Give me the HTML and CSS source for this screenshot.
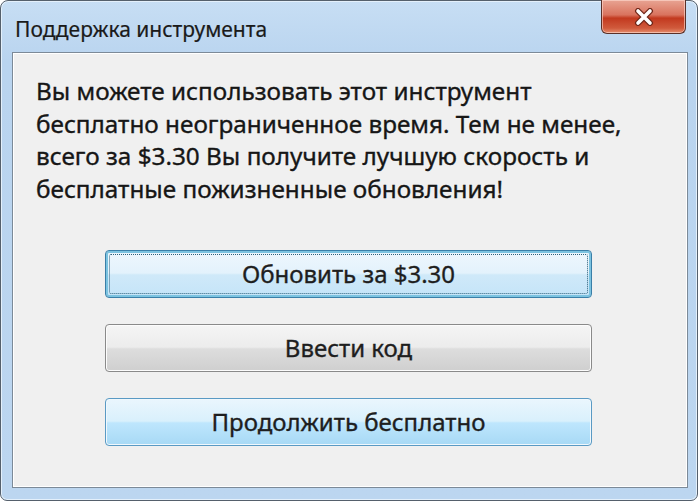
FILE: index.html
```html
<!DOCTYPE html>
<html lang="ru">
<head>
<meta charset="utf-8">
<title>Поддержка инструмента</title>
<link rel="stylesheet" href="styles.css">
</head>
<body>
<div class="window">
  <div class="titlebar">
    <div class="title">Поддержка инструмента</div>
    <div class="close">
      <svg width="24" height="18" viewBox="0 0 24 18">
        <path d="M6 3 L18 15 M18 3 L6 15" stroke="#6e2618" stroke-width="6" stroke-linecap="round"/>
        <path d="M6 3 L18 15 M18 3 L6 15" stroke="#ffffff" stroke-width="3.6" stroke-linecap="round"/>
      </svg>
    </div>
  </div>
  <div class="panel">
    <p class="message">Вы можете использовать этот инструмент<br>бесплатно неограниченное время. Тем не менее,<br>всего за $3.30 Вы получите лучшую скорость и<br>бесплатные пожизненные обновления!</p>
    <div class="buttons">
      <div class="btn btn-focus"><span class="focus-ring">Обновить за $3.30</span></div>
      <div class="btn btn-normal">Ввести код</div>
      <div class="btn btn-hover">Продолжить бесплатно</div>
    </div>
  </div>
</div>
</body>
</html>
```
FILE: styles.css
```css
html, body {
  margin: 0;
  padding: 0;
  background: #ffffff;
}
body {
  font-family: "Noto Sans", "Open Sans", sans-serif;
  color: #1e1e1e;
}
.window {
  width: 698px;
  height: 501px;
  box-sizing: border-box;
  border: 1px solid #55606c;
  border-radius: 8px 8px 7px 7px;
  background: linear-gradient(180deg, #c7def4 0%, #b9d4ef 12%, #bcd6f0 100%);
  box-shadow: inset 0 0 0 1px #e4f0fb;
  display: flex;
  flex-direction: column;
  padding: 0 9px 12px 11px;
}
.titlebar {
  height: 51px;
  flex: none;
  display: flex;
  justify-content: space-between;
  align-items: flex-start;
}
.title {
  margin-top: 13px;
  margin-left: 3px;
  font-size: 21px;
  line-height: 30px;
  color: #1a1a1a;
  -webkit-text-stroke: 0.2px #1a1a1a;
}
.close {
  width: 85px;
  height: 34px;
  box-sizing: border-box;
  margin-right: 2px;
  margin-top: -1px;
  border: 1px solid #5a3028;
  border-top: none;
  border-radius: 0 0 6px 6px;
  background: linear-gradient(180deg, #e8a493 0%, #d9735e 45%, #c2391f 55%, #d05a3c 85%, #e58e6e 100%);
  box-shadow: inset 0 0 0 1px rgba(255,220,210,0.6);
  display: flex;
  align-items: center;
  justify-content: center;
}
.panel {
  flex: 1;
  border: 1px solid #7c8a98;
  box-shadow: inset 0 0 0 1px #ffffff;
  background: #f0f0f0;
  display: flex;
  flex-direction: column;
}
.message {
  margin: 22px 0 0 23px;
  font-size: 24.3px;
  line-height: 32.7px;
  white-space: nowrap;
  color: #161616;
  -webkit-text-stroke: 0.35px #161616;
}
.buttons {
  margin-top: 44px;
  display: flex;
  flex-direction: column;
  gap: 26px;
  padding-left: 92px;
}
.btn {
  width: 487px;
  height: 48px;
  box-sizing: border-box;
  border-radius: 4px;
  display: flex;
  align-items: center;
  justify-content: center;
  font-size: 24px;
  color: #1e1e1e;
  -webkit-text-stroke: 0.35px #1e1e1e;
}
.btn-focus {
  border: 1px solid #3a7fa8;
  background: linear-gradient(180deg, #eef7fd 0%, #e3f2fc 48%, #cfe9f9 52%, #c4e4f8 100%);
  box-shadow: inset 0 0 0 2px #7cc3e0;
  padding: 3px;
}
.focus-ring {
  flex: 1;
  align-self: stretch;
  display: flex;
  align-items: center;
  justify-content: center;
  border: 1px dotted #2c5f7a;
  border-radius: 2px;
}
.btn-normal {
  border: 1px solid #8a8a8a;
  background: linear-gradient(180deg, #f5f5f5 0%, #ececec 48%, #dddddd 52%, #cfcfcf 100%);
  box-shadow: inset 0 0 0 1px #fcfcfc;
}
.btn-hover {
  border: 1px solid #5a9ac4;
  background: linear-gradient(180deg, #eaf6fd 0%, #d9f0fc 48%, #bee6fd 52%, #a7d9f5 100%);
  box-shadow: inset 0 0 0 1px #f0f8fd;
}
```
